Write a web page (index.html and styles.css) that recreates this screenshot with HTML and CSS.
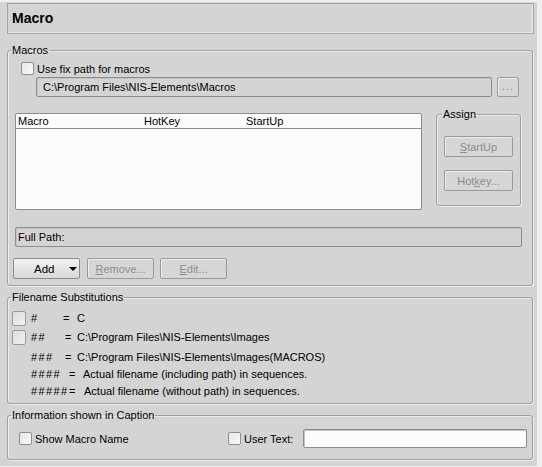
FILE: index.html
```html
<!DOCTYPE html>
<html>
<head>
<meta charset="utf-8">
<link rel="stylesheet" href="styles.css">
</head>
<body>
<div class="panel">
  <div class="title">Macro</div>

  <fieldset class="grp macros">
    <legend>Macros</legend>
    <div class="chk-row fix"><span class="cb"></span><span>Use fix path for macros</span></div>
    <div class="path-row">
      <div class="field path">C:\Program Files\NIS-Elements\Macros</div>
      <div class="btn dis browse">...</div>
    </div>
    <div class="list-row">
      <div class="list">
        <div class="list-head"><span class="c1">Macro</span><span class="c2">HotKey</span><span class="c3">StartUp</span></div>
      </div>
      <fieldset class="grp assign">
        <legend>Assign</legend>
        <div class="btn dis wide"><u>S</u>tartUp</div>
        <div class="btn dis wide second">Hot<u>k</u>ey...</div>
      </fieldset>
    </div>
    <div class="field full">Full Path:</div>
    <div class="btn-row">
      <div class="btn add"><span class="add-label">Add</span><span class="tri"></span></div>
      <div class="btn dis"><u>R</u>emove...</div>
      <div class="btn dis edit"><u>E</u>dit...</div>
    </div>
  </fieldset>

  <fieldset class="grp subs">
    <legend>Filename Substitutions</legend>
    <div class="sub-row r1"><span class="cb big"></span><span class="h h1">#</span><span class="eq e1">=</span><span>C</span></div>
    <div class="sub-row r2"><span class="cb big"></span><span class="h h2">##</span><span class="eq e2">=</span><span>C:\Program Files\NIS-Elements\Images</span></div>
    <div class="sub-row txt r3"><span class="h h2">###</span><span class="eq e2">=</span><span>C:\Program Files\NIS-Elements\Images(MACROS)</span></div>
    <div class="sub-row txt"><span class="h h4">####</span><span class="eq e4">=</span><span>Actual filename (including path) in sequences.</span></div>
    <div class="sub-row txt"><span class="h h5">#####</span><span class="eq e5">=</span><span>Actual filename (without path) in sequences.</span></div>
  </fieldset>

  <fieldset class="grp info">
    <legend>Information shown in Caption</legend>
    <div class="info-row">
      <div class="chk-row name"><span class="cb"></span><span>Show Macro Name</span></div>
      <div class="chk-row user"><span class="cb"></span><span>User Text:</span></div>
      <div class="field input"></div>
    </div>
  </fieldset>
</div>
</body>
</html>
```

FILE: styles.css
```css
html, body {
  margin: 0;
  padding: 0;
  background: #efefef;
}
body {
  font-family: "Liberation Sans", Arial, sans-serif;
  font-size: 11px;
  color: #000;
  width: 542px;
  height: 467px;
  overflow: hidden;
}
.panel {
  box-sizing: border-box;
  width: 537px;
  height: 464px;
  margin-top: 2px;
  background: #d4d4d4;
  padding: 1px 0 0 7px;
}
.title {
  box-sizing: border-box;
  width: 527px;
  height: 31px;
  border: 1px solid #a4a4a4;
  box-shadow: inset -1px -1px 0 #ececec;
  font-weight: bold;
  font-size: 14px;
  line-height: 29px;
  padding-left: 4px;
}
.grp {
  box-sizing: border-box;
  margin: 0;
  padding: 0;
  min-width: 0;
  border: 1px solid #a0a0a0;
  border-radius: 3px;
  box-shadow: inset 1px 1px 0 #ececec, 1px 1px 0 #ececec;
}
.grp > legend {
  padding: 0 1px;
  margin-left: 3px;
  line-height: 13px;
  height: 13px;
}
.macros {
  width: 526px;
  margin-top: 10px;
  padding-bottom: 6px;
}
.chk-row {
  display: flex;
  align-items: center;
  height: 13px;
  white-space: nowrap;
}
.cb {
  box-sizing: border-box;
  display: inline-block;
  width: 13px;
  height: 13px;
  border: 1px solid #8f8f8f;
  border-radius: 2px;
  background: linear-gradient(135deg, #e6e6e6, #fbfbfb);
  margin-right: 3px;
  flex: none;
}
.fix {
  margin: 5px 0 0 13px;
}
.path-row {
  display: flex;
  margin: 2px 0 0 28px;
  height: 20px;
}
.field {
  box-sizing: border-box;
  border: 1px solid #8c8c8c;
  border-radius: 2px;
  box-shadow: inset 1px 1px 0 #c4c4c4;
  white-space: nowrap;
}
.path {
  width: 456px;
  height: 20px;
  line-height: 18px;
  padding-left: 6px;
}
.btn {
  box-sizing: border-box;
  width: 67px;
  height: 21px;
  border: 1px solid #8c8c8c;
  border-radius: 2px;
  background: linear-gradient(#f2f2f2, #d8d8d8);
  display: flex;
  align-items: center;
  justify-content: center;
  white-space: nowrap;
}
.btn.dis {
  background: #d6d6d6;
  color: #8d8d8d;
  border-color: #9a9a9a;
  box-shadow: inset 1px 1px 0 #ededed;
}
.browse {
  width: 22px;
  height: 20px;
  margin-left: 5px;
  letter-spacing: 1px;
  padding-bottom: 2px;
}
.list-row {
  display: flex;
  align-items: flex-start;
  margin: 11px 0 0 7px;
}
.list {
  box-sizing: border-box;
  width: 407px;
  height: 97px;
  margin-top: 5px;
  background: #fcfcfc;
  border: 1px solid #8c8c8c;
  border-radius: 2px;
}
.list-head {
  display: flex;
  height: 14px;
  line-height: 14px;
  border-bottom: 1px solid #8c8c8c;
}
.list-head .c1 { width: 126px; padding-left: 2px; }
.list-head .c2 { width: 102px; }
.assign {
  width: 85px;
  margin-left: 14px;
  padding: 0 0 14px 7px;
}
.assign > legend {
  margin-left: -2px;
}
.btn.wide {
  width: 69px;
  margin-top: 15px;
}
.btn.wide.second {
  margin-top: 13px;
}
.full {
  width: 507px;
  height: 20px;
  margin: 17px 0 0 7px;
  line-height: 18px;
  padding-left: 2px;
}
.btn-row {
  display: flex;
  gap: 7px;
  margin: 11px 0 0 5px;
}
.btn-row .edit {
  margin-left: -1px;
}
.add {
  justify-content: flex-start;
  padding-left: 20px;
  font-size: 11.5px;
}
.tri {
  width: 0;
  height: 0;
  border-left: 4px solid transparent;
  border-right: 4px solid transparent;
  border-top: 4px solid #000;
  margin-left: 15px;
}
.subs {
  width: 526px;
  margin-top: 5px;
  padding-bottom: 4px;
}
.sub-row {
  display: flex;
  align-items: center;
  height: 16px;
  white-space: nowrap;
  padding-left: 4px;
}
.sub-row.r1 { margin-top: 6px; }
.sub-row.r2 { margin-top: 3px; }
.sub-row.txt {
  height: 17px;
  padding-left: 23px;
}
.sub-row.r3 { margin-top: 3px; }
.cb.big {
  width: 14px;
  height: 15px;
  margin-right: 5px;
  border-color: #9a9a9a;
  background: linear-gradient(135deg, #dcdcdc, #f2f2f2);
}
.h { display: inline-block; flex: none; letter-spacing: 1.4px; }
.h1 { width: 32px; }
.h2 { width: 34px; }
.h4 { width: 38px; }
.h5 { width: 38px; }
.eq { display: inline-block; flex: none; }
.e1 { width: 14px; }
.e2 { width: 12px; }
.e4 { width: 14px; }
.e5 { width: 15px; }
.info {
  width: 526px;
  margin-top: 5px;
  padding-bottom: 11px;
}
.info-row {
  display: flex;
  align-items: center;
  margin-top: 7px;
  height: 19px;
}
.chk-row.name {
  margin-left: 11px;
  width: 209px;
}
.chk-row.user {
  width: 75px;
}
.input {
  width: 224px;
  height: 19px;
  background: #fcfcfc;
}
```
